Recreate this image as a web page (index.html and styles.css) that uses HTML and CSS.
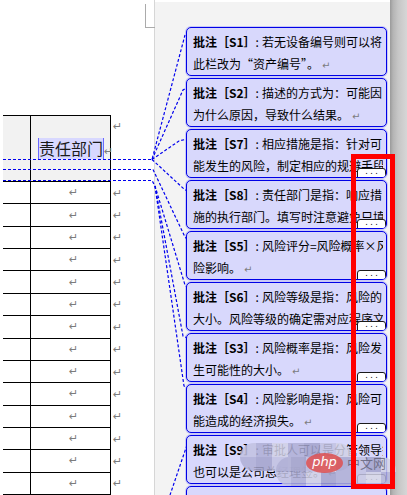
FILE: index.html
```html
<!DOCTYPE html>
<html>
<head>
<meta charset="utf-8">
<link rel="stylesheet" href="styles.css">
</head>
<body>
<div class="screen">
  <div class="page">
    <div class="crop"></div>
    <div class="tbl">
      <div class="c1 head"></div>
      <div class="c2 head"><span class="range">责任部门</span><span class="pm">↵</span></div>
      <div class="c3 head-end"><span class="pm">↵</span></div>

      <div class="c1"></div><div class="c2"><span class="pm">↵</span></div><div class="c3"><span class="pm">↵</span></div>
      <div class="c1"></div><div class="c2"><span class="pm">↵</span></div><div class="c3"><span class="pm">↵</span></div>
      <div class="c1"></div><div class="c2"><span class="pm">↵</span></div><div class="c3"><span class="pm">↵</span></div>
      <div class="c1"></div><div class="c2"><span class="pm">↵</span></div><div class="c3"><span class="pm">↵</span></div>
      <div class="c1"></div><div class="c2"><span class="pm">↵</span></div><div class="c3"><span class="pm">↵</span></div>
      <div class="c1"></div><div class="c2"><span class="pm">↵</span></div><div class="c3"><span class="pm">↵</span></div>
      <div class="c1"></div><div class="c2"><span class="pm">↵</span></div><div class="c3"><span class="pm">↵</span></div>
      <div class="c1"></div><div class="c2"><span class="pm">↵</span></div><div class="c3"><span class="pm">↵</span></div>
      <div class="c1"></div><div class="c2"><span class="pm">↵</span></div><div class="c3"><span class="pm">↵</span></div>
      <div class="c1"></div><div class="c2"><span class="pm">↵</span></div><div class="c3"><span class="pm">↵</span></div>
      <div class="c1"></div><div class="c2"><span class="pm">↵</span></div><div class="c3"><span class="pm">↵</span></div>
      <div class="c1"></div><div class="c2"><span class="pm">↵</span></div><div class="c3"><span class="pm">↵</span></div>
      <div class="c1"></div><div class="c2"><span class="pm">↵</span></div><div class="c3"><span class="pm">↵</span></div>
      <div class="c1"></div><div class="c2"><span class="pm">↵</span></div><div class="c3"><span class="pm">↵</span></div>
    </div>
  </div>

  <div class="margin">
    <div class="notes">
      <div class="note"><span class="line"><b>批注［S1］</b><span class="colon">:</span>若无设备编号则可以将</span><span class="line">此栏改为“资产编号”。<span class="pm">↵</span></span></div>
      <div class="note"><span class="line"><b>批注［S2］</b><span class="colon">:</span>描述的方式为：可能因</span><span class="line">为什么原因，导致什么结果。<span class="pm">↵</span></span></div>
      <div class="note"><span class="line"><b>批注［S7］</b><span class="colon">:</span>相应措施是指：针对可</span><span class="line">能发生的风险，制定相应的规避手段</span><span class="more">. . .</span></div>
      <div class="note"><span class="line"><b>批注［S8］</b><span class="colon">:</span>责任部门是指：响应措</span><span class="line">施的执行部门。填写时注意避免只填</span><span class="more">. . .</span></div>
      <div class="note"><span class="line"><b>批注［S5］</b><span class="colon">:</span>风险评分=风险概率×风</span><span class="line">险影响。<span class="pm">↵</span></span><span class="more">. . .</span></div>
      <div class="note"><span class="line"><b>批注［S6］</b><span class="colon">:</span>风险等级是指：风险的</span><span class="line">大小。风险等级的确定需对应程序文</span><span class="more">. . .</span></div>
      <div class="note"><span class="line"><b>批注［S3］</b><span class="colon">:</span>风险概率是指：风险发</span><span class="line">生可能性的大小。<span class="pm">↵</span></span><span class="more">. . .</span></div>
      <div class="note"><span class="line"><b>批注［S4］</b><span class="colon">:</span>风险影响是指：风险可</span><span class="line">能造成的经济损失。<span class="pm">↵</span></span><span class="more">. . .</span></div>
      <div class="note"><span class="line"><b>批注［S9］</b><span class="colon">:</span>审批人可以是分管领导签，</span><span class="line">也可以是公司总经理签。<span class="pm">↵</span></span><span class="more">. . .</span></div>
      <div class="note"><span class="line"><b>批注［S10］</b><span class="colon">:</span>责任人：组长签字即可</span><span class="line">。<span class="pm">↵</span></span></div>
    </div>
  </div>
  <div class="scroll"></div>

  <svg class="links" width="407" height="495" viewBox="0 0 407 495">
    <g fill="none" stroke="#0000ee" stroke-width="1.2" stroke-dasharray="3 2">
      <polyline points="3,159.5 152,159.5 185,35"/>
      <polyline points="152,159.5 183,90 187,88"/>
      <polyline points="152,159.5 179,141 187,139"/>
      <polyline points="152,159.5 184,189 187,191"/>
      <polyline points="3,169.5 153,169.5 185,237 187,239"/>
      <polyline points="3,180.5 152,180.5 155,186 185,285 187,287"/>
      <polyline points="155,186 183,336 187,338"/>
      <polyline points="155,186 184,386 187,388"/>
      <polyline points="187,445 170,495"/>
    </g>
  </svg>

  <div class="mark">
    <div class="blob blob-a"><i class="m1"></i><i class="m2"></i><i class="m3"></i><i class="m2"></i><i class="m4"></i><i class="m1"></i><i class="m3"></i><i class="m2"></i><i class="m4"></i><i class="m1"></i><i class="m3"></i><i class="m2"></i><i class="m1"></i><i class="m4"></i></div>
    <div class="blob blob-b"><i class="m2"></i><i class="m4"></i><i class="m1"></i><i class="m3"></i><i class="m2"></i><i class="m1"></i><i class="m4"></i><i class="m3"></i><i class="m1"></i><i class="m2"></i><i class="m3"></i><i class="m4"></i><i class="m2"></i><i class="m1"></i><i class="m3"></i><i class="m2"></i></div>
    <div class="logo"><span class="php">php</span><span class="cn">中文网</span></div>
  </div>

  <div class="redbox"></div>
</div>
</body>
</html>
```

FILE: styles.css
```css
html, body {
  margin: 0;
  padding: 0;
}
body {
  width: 407px;
  height: 495px;
  overflow: hidden;
  background: #ffffff;
  font-family: "Noto Sans CJK SC", "DejaVu Sans", sans-serif;
}
.screen {
  position: relative;
  width: 407px;
  height: 495px;
  display: flex;
  overflow: hidden;
}

/* left document page */
.page {
  position: relative;
  width: 154px;
  flex: 0 0 154px;
  background: #ffffff;
  border-right: 1px solid #d6d6d6;
}
.crop {
  position: absolute;
  left: 145px;
  top: 4px;
  width: 9px;
  height: 23px;
  border-left: 1px solid #ababab;
  border-bottom: 1px solid #ababab;
}
.tbl {
  margin: 115px 0 0 3px;
  display: grid;
  grid-template-columns: 28px 80px 14px;
  grid-template-rows: 66px;
  grid-auto-rows: 22.36px;
  border-top: 1px solid #000;
  width: 108px;
}
.tbl > div {
  box-sizing: border-box;
}
.c1 {
  border-right: 1px solid #000;
  border-bottom: 1px solid #000;
}
.c2 {
  border-right: 1px solid #000;
  border-bottom: 1px solid #000;
  display: flex;
  align-items: center;
  justify-content: center;
  padding-left: 6px;
  white-space: nowrap;
}
.c3 {
  display: flex;
  align-items: center;
  padding-left: 2px;
  width: 14px;
}
.head {
  background: #f2f2f2;
}
.c2.head {
  font-size: 16px;
  color: #1a1a1a;
  justify-content: flex-start;
  padding-left: 7px;
}
.head-end {
  align-items: flex-start;
  padding-top: 5px;
}
.range {
  background: #d8d8ff;
  line-height: 21px;
  padding: 0;
  border-left: 1px solid #6a6aff;
  border-right: 1px solid #6a6aff;
}
.pm {
  font-family: "DejaVu Sans", sans-serif;
  font-size: 11px;
  color: #7c7c7c;
  line-height: 1;
}
.c2.head .pm {
  margin-left: 0;
  margin-top: 6px;
}

/* comment margin */
.margin {
  flex: 1;
  background: #f3f3f3;
  padding: 27px 0 0 31px;
  margin-top: 2px;
}
.notes {
  position: relative;
  z-index: 2;
  width: 201px;
  display: flex;
  flex-direction: column;
  gap: 2px;
  margin-top: -2px;
}
.note {
  position: relative;
  box-sizing: border-box;
  height: 49px;
  flex: 0 0 49px;
  border: 1px solid #0000e6;
  border-radius: 5px;
  background: #d8d8fc;
  box-shadow: 0 0 0 1px rgba(70, 70, 255, 0.25);
  padding: 3px 3px 0 6px;
  font-size: 12px;
  line-height: 21.5px;
  color: #000;
  white-space: nowrap;
  overflow: hidden;
}
.line {
  display: block;
  overflow: hidden;
}
.note b {
  font-weight: 700;
}
.colon {
  padding: 0 3px 0 0;
}
.note .pm {
  font-size: 10px;
  margin-left: 3px;
}
.more {
  position: absolute;
  right: 0;
  bottom: -1px;
  box-sizing: border-box;
  width: 29px;
  height: 10px;
  background: #ffffff;
  border: 1px solid #1a1a1a;
  border-radius: 3px 3px 0 0;
  font-family: "DejaVu Sans", sans-serif;
  font-size: 8px;
  line-height: 6px;
  text-align: center;
  color: #000;
}

.scroll {
  width: 17px;
  flex: 0 0 17px;
  background: linear-gradient(to right, #9a9a9a 0, #b4b4b4 3px, #c6c6c6 8px, #d6d6d6 100%);
}

/* overlays */
.links {
  position: absolute;
  left: 0;
  top: 0;
  z-index: 1;
  pointer-events: none;
}
.mark {
  position: absolute;
  left: 240px;
  top: 443px;
  width: 156px;
  height: 43px;
  z-index: 3;
}
.blob {
  position: absolute;
  display: grid;
  overflow: hidden;
  opacity: 0.85;
}
.blob i {
  display: block;
}
.blob-a {
  left: 0;
  top: 0;
  width: 112px;
  height: 28px;
  border-radius: 14px;
  grid-template-columns: repeat(7, 16px);
  grid-template-rows: repeat(2, 14px);
}
.blob-b {
  left: 36px;
  top: 14px;
  width: 120px;
  height: 29px;
  border-radius: 14px;
  grid-template-columns: repeat(8, 15px);
  grid-template-rows: repeat(2, 15px);
}
.m1 { background: #c2c2e2; }
.m2 { background: #b0b0d6; }
.m3 { background: #d2d2e6; }
.m4 { background: #a4a4cc; }
.logo {
  position: absolute;
  left: 66px;
  top: 10px;
  display: flex;
  align-items: center;
  gap: 4px;
}
.php {
  display: inline-block;
  width: 37px;
  height: 20px;
  border-radius: 50%;
  background: rgba(222, 80, 80, 0.85);
  color: #ffffff;
  font-family: "DejaVu Sans", sans-serif;
  font-style: italic;
  font-size: 13px;
  line-height: 18px;
  text-align: center;
}
.cn {
  color: rgba(90, 90, 110, 0.75);
  font-size: 13px;
  line-height: 18px;
}
.redbox {
  position: absolute;
  left: 351px;
  top: 154px;
  width: 44px;
  height: 335px;
  box-sizing: border-box;
  border: 5px solid #ff0000;
  z-index: 4;
}
```
